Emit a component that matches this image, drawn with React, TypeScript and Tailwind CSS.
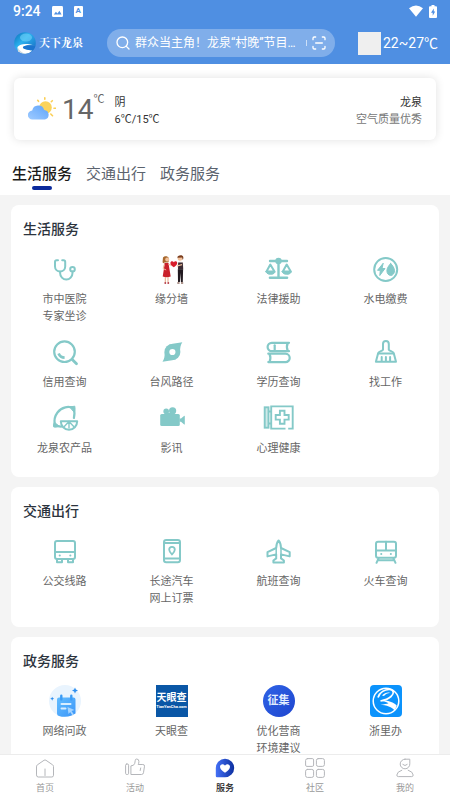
import { useState } from "react";
import type { ReactNode } from "react";
import { ScanLine, Search } from "lucide-react";
import { clsx } from "clsx";

interface Service {
  label: string[];
  icon: ReactNode;
}

interface Section {
  title: string;
  items: Service[];
}

const TEAL = "#84c9c8";

// Shared 32px line icon frame
function Line({ children, width = 2 }: { children: ReactNode; width?: number }) {
  return (
    <svg
      viewBox="0 0 32 32"
      className="size-8"
      fill="none"
      stroke={TEAL}
      strokeWidth={width}
      strokeLinecap="round"
      strokeLinejoin="round"
      aria-hidden="true"
    >
      {children}
    </svg>
  );
}

const StethoscopeIcon = () => (
  <Line>
    <path d="M9 7.3H7.6Q6 7.3 6 9v4.5a5.1 5.1 0 0 0 10.2 0V9q0-1.7-1.6-1.7H13.2" />
    <path d="M11.1 18.7V20a6.2 6.5 0 0 0 12.4 0v-1.4" />
    <circle cx="23.5" cy="16.2" r="2.3" />
  </Line>
);

const CoupleIcon = () => (
  <svg viewBox="0 0 32 32" className="size-8" aria-hidden="true">
    {/* woman */}
    <path d="M7 4.5c1.5-2 5-1.7 5.7.5.5 1.8.2 3-.5 4.5H8.500C7.500 11 6.500 10 6.600 8.500z" fill="#a8692f" />
    <circle cx="11.2" cy="6.6" r="2" fill="#f3c29c" />
    <path d="M8.500 10h4l.6 4 1.600 9.600c-2.500 1-5.500 1-8 0L8.200 14z" fill="#c9202b" />
    <path d="M8.200 11.500l-1 4 3 1.500" stroke="#f0bb95" strokeWidth="1" fill="none" />
    <path d="M12.500 11.500l3.200.8" stroke="#f0bb95" strokeWidth="1.1" fill="none" />
    <path d="M9.300 24v5M12 24v5" stroke="#e5ab86" strokeWidth="1" />
    <path d="M8.500 30h1.600M11.500 30h1.600" stroke="#a81620" strokeWidth="1.3" />
    {/* heart */}
    <path d="M17.8 14.3c-2-1.5-3.4-2.7-3.4-4.3 0-2 2.500-2.400 3.400-.7.9-1.700 3.400-1.300 3.400.7 0 1.600-1.400 2.800-3.400 4.300z" fill="#d81e2c" />
    {/* man */}
    <circle cx="24" cy="5.4" r="2.4" fill="#f3c29c" />
    <path d="M21.3 4.8c-.3-2.800 5.500-3.800 6-.8.2 1.500-.3 2.500-.6 3l-.6-2.400z" fill="#7a3c1c" />
    <path d="M21.500 9.300l2.500-1 3 1 .6 6.200h-6.200z" fill="#f4ece8" />
    <path d="M22.200 9.500h4.600l.4 7h-5.200z" fill="#3b2a33" />
    <path d="M21 13l5-1.300" stroke="#f3c29c" strokeWidth="1.2" />
    <path d="M21.800 16.300h5.300L26.800 29h-1.900l-.5-9-.5 9H22z" fill="#221a20" />
    <path d="M21.300 30h2.300M25 30h2.200" stroke="#5d2a1b" strokeWidth="1.2" />
  </svg>
);

const ScaleIcon = () => (
  <Line>
    <path d="M7 8h17M15.500 8v16.500" strokeWidth="2.4" />
    <path d="M7 24.800h17" strokeWidth="2.6" />
    <circle cx="15.5" cy="8" r="2.2" fill={TEAL} />
    <path d="M7.300 11.500L3.500 18.500h8z" />
    <path d="M3 18.500h9c0 3.800-9 3.800-9 0z" fill={TEAL} strokeWidth="1" />
    <path d="M23.700 11.500l-3.900 7h8z" />
    <path d="M19.200 18.500h9c0 3.800-9 3.800-9 0z" fill={TEAL} strokeWidth="1" />
  </Line>
);

const UtilityIcon = () => (
  <Line>
    <circle cx="15.7" cy="16.5" r="11.5" />
    <path d="M13 10.500l-5.500 6.800h2.800L9.800 22.500l5.200-7h-2.700z" fill={TEAL} strokeWidth="1" />
    <path d="M20.700 10.500c2 2 3.800 4.800 3.800 7.300a3.800 4.700 0 0 1-7.600 0c0-2.500 1.800-5.300 3.800-7.300z" fill={TEAL} strokeWidth="1" />
  </Line>
);

const MagnifierIcon = () => (
  <Line width={2.2}>
    <circle cx="15.5" cy="15.7" r="10.3" />
    <path d="M23.200 23.400l4.300 4.300" strokeWidth="2.8" />
    <path d="M9.600 17.500q1.700 4 6 4.200" strokeWidth="2.8" strokeLinecap="butt" />
  </Line>
);

const TyphoonIcon = () => (
  <svg viewBox="0 0 32 32" className="size-8" fill={TEAL} aria-hidden="true">
    <circle cx="16.400" cy="16" r="8" />
    <path d="M26.300 6.200C22 7.300 18 6.700 13 8.700l11 7c.2-4 .3-6.500 2.300-9.500z" />
    <path d="M6.500 25.800c4.300-1.100 8.300-.5 13.300-2.500l-11-7c-.2 4-.3 6.500-2.300 9.500z" />
    <circle cx="16.400" cy="16" r="3.100" fill="#fff" />
  </svg>
);

const BooksIcon = () => (
  <Line width={2.2}>
    <path d="M26 6.800H8.800a4.200 4.200 0 0 0 0 8.400H26M24.800 6.800q-1.800 4.200 0 8.400" />
    <path d="M5.300 17.700h17.200a4.200 4.200 0 0 1 0 8.400H5.300M6.500 17.700q1.800 4.200 0 8.400" />
    <path d="M11.700 9.300v4.500" />
  </Line>
);

const BrushIcon = () => (
  <Line>
    <path d="M13 13.800V8a2.900 2.900 0 0 1 5.800 0v5.800c1 1.500 4.200 1.300 4.900 3.300l2.300 8.700H5.900l2.300-8.700c.7-2 3.800-1.800 4.800-3.300z" />
    <path d="M8.500 17.600h14.800M11.700 21v4M15.900 21v4M20.100 21v4" />
  </Line>
);

const LemonIcon = () => (
  <Line>
    <path d="M24.500 6.500C20 3.500 12.500 5 8.500 10.500 5.500 14.500 5 18.500 5.800 22.500q3.500 2.500 7.500 2M24.500 6.500q1.700 4 .4 9.500" strokeWidth="2.2" />
    <path d="M20.500 4.600q2.500.3 5.300-.4.700 3-.2 6z" fill={TEAL} strokeWidth="1" />
    <path d="M5.200 20.500q-1.300 2.500-.5 4.400 2.500.7 5-.5z" fill={TEAL} strokeWidth="1" />
    <path d="M11.800 19.200h16.400a8.200 8.500 0 0 1-16.400 0z" fill="#fff" />
    <path d="M20 19.500v6.500M20 19.500l-4.700 5M20 19.500l4.700 5" strokeWidth="1.4" />
  </Line>
);

const CameraIcon = () => (
  <svg viewBox="0 0 32 32" className="size-8" fill={TEAL} aria-hidden="true">
    <circle cx="10.2" cy="9.4" r="2.8" />
    <circle cx="16.6" cy="8.8" r="3.6" />
    <rect x="4.2" y="12" width="19.6" height="12" rx="1.5" />
    <path d="M23.500 16.500h1.500l3.300-2.800c.4 0 .5.200.5.500v8c0 .4-.3.500-.6.300L25 19.800h-1.500z" />
    <rect x="11" y="11" width="4" height="2" />
  </svg>
);

const ClinicIcon = () => (
  <Line>
    <g strokeLinecap="butt" strokeLinejoin="miter" strokeWidth="1.9">
      <rect x="1.7" y="5.3" width="3.8" height="20.4" fill="#cfe9e8" />
      <path d="M5.500 9.500h2.700M5.500 21.500h2.700" />
      <path d="M22.500 26.600H8.200V4.400h21.500v22.200h-4.500" />
      <path d="M16.900 8.800h4.600v4.200h4.200v4.600h-4.200v4.200h-4.600v-4.200h-4.200V13h4.200z" />
    </g>
  </Line>
);

const BusIcon = () => (
  <Line>
    <rect x="6" y="6" width="20" height="18" rx="2" />
    <path d="M6 17h20" />
    <path d="M8 24v3.300h5V24M19 24v3.300h5V24" />
    <path d="M10.700 20.400h.1M21.300 20.400h.1" />
  </Line>
);

const PhoneTicketIcon = () => (
  <Line>
    <rect x="8" y="5" width="16" height="22.3" rx="2.2" />
    <path d="M8 8h16M8 23.400h16" />
    <path d="M16 19.500c-1.800-2-2.800-3.200-2.800-4.800a2.800 2.800 0 0 1 5.600 0c0 1.600-1 2.800-2.800 4.800z" strokeWidth="1.8" />
  </Line>
);

const PlaneIcon = () => (
  <Line>
    <path d="M15.600 5.500q-2.300 2.500-2.400 7.500L4.500 17.200v4.200l8.700-2v4l-2.800 2.100v2h10.500v-2l-2.900-2.100v-4l8.700 2v-4.200L18 13q-.1-5-2.400-7.500z" />
    <path d="M13.200 13v6.400M18 13v6.400" strokeWidth="1.5" />
  </Line>
);

const TrainIcon = () => (
  <Line>
    <rect x="6" y="6.8" width="20" height="16" rx="2" />
    <path d="M6 15.400h20M16 6.800v8.600M8 25.200h16M8.500 23.500l-2 4.300M23.500 23.500l2 4.300" />
    <path d="M11.200 19h.1M20.800 19h.1" />
  </Line>
);

const InquiryIcon = () => (
  <svg viewBox="0 0 32 32" className="size-8" aria-hidden="true">
    <defs>
      <linearGradient id="inquiry" x1="0" y1="0" x2="1" y2="1">
        <stop offset="0" stopColor="#63bdff" />
        <stop offset="1" stopColor="#3a95f8" />
      </linearGradient>
    </defs>
    <circle cx="16" cy="16" r="16" fill="#e9f4fe" />
    <path d="M10 12.500h14.500q2 0 2 2v14L22 30.800q-6 2-12 .2-2-.5-2-2.500v-14q0-2 2-2z" fill="url(#inquiry)" />
    <path d="M12.300 10.800v3.600M22.300 10.800v3.600" stroke="#3b9cf6" strokeWidth="2.4" strokeLinecap="round" />
    <path d="M12.500 19h9M12.500 23.500h4" stroke="#d9eeff" strokeWidth="2" strokeLinecap="round" />
    <path d="M18.500 22l7 3-3 1 2.500 3.500-1.500 1-2.300-3.500-1.700 2z" fill="#a5d4ff" />
    <path d="M26 2.500l.9 2.100 2.100.9-2.100.9-.9 2.100-.9-2.100-2.100-.9 2.100-.9zM3.200 11.700l.6 1.400 1.400.6-1.400.6-.6 1.400-.6-1.400-1.400-.6 1.400-.6z" fill="#2e8ff0" />
  </svg>
);

const TianyanIcon = () => (
  <span className="flex size-8 flex-col items-center justify-center bg-[#0a57a6] text-white">
    <span className="text-[10px] leading-3 font-bold whitespace-nowrap">天眼查</span>
    <span className="text-[4px] leading-[6px] font-bold whitespace-nowrap">TianYanCha.com</span>
  </span>
);

const CollectIcon = () => (
  <span className="flex size-8 items-center justify-center rounded-full bg-linear-to-br from-[#2f63e6] to-[#1f45cf]">
    <span className="text-[11px] leading-4 font-bold text-[#e3eeff]">征集</span>
  </span>
);

const ZhelibanIcon = () => (
  <svg viewBox="0 0 32 32" className="size-8" fill="none" stroke="#fff" aria-hidden="true">
    <rect width="32" height="32" rx="4" fill="#0c93fc" stroke="none" />
    <circle cx="16" cy="16" r="12.8" strokeWidth="1.5" />
    {/* upper ribbon */}
    <path d="M8 12.500C9.500 7 15 4.300 19.500 4.500c4.500.3 5 4 1.500 7-2.500 2.200-6.500 3.800-10.500 4.500" strokeWidth="1.7" />
    <path d="M12 10.500c2.500-2.500 6-3.500 8-2.500-2.500 0-4.500 1-6 3z" fill="#fff" stroke="none" />
    {/* lower ribbon */}
    <path d="M10 15.300c6-.3 14.500 1.700 16.800 5.500l-2.300 4.700C22.500 22 16 20.300 10.500 19.800c3.500-.5 6.500-.9 8-1.500-2.500-1.300-5.500-2.200-8.500-3z" fill="#fff" stroke="none" />
  </svg>
);

const sections: Section[] = [
  {
    title: "生活服务",
    items: [
      { label: ["市中医院", "专家坐诊"], icon: <StethoscopeIcon /> },
      { label: ["缘分墙"], icon: <CoupleIcon /> },
      { label: ["法律援助"], icon: <ScaleIcon /> },
      { label: ["水电缴费"], icon: <UtilityIcon /> },
      { label: ["信用查询"], icon: <MagnifierIcon /> },
      { label: ["台风路径"], icon: <TyphoonIcon /> },
      { label: ["学历查询"], icon: <BooksIcon /> },
      { label: ["找工作"], icon: <BrushIcon /> },
      { label: ["龙泉农产品"], icon: <LemonIcon /> },
      { label: ["影讯"], icon: <CameraIcon /> },
      { label: ["心理健康"], icon: <ClinicIcon /> },
    ],
  },
  {
    title: "交通出行",
    items: [
      { label: ["公交线路"], icon: <BusIcon /> },
      { label: ["长途汽车", "网上订票"], icon: <PhoneTicketIcon /> },
      { label: ["航班查询"], icon: <PlaneIcon /> },
      { label: ["火车查询"], icon: <TrainIcon /> },
    ],
  },
  {
    title: "政务服务",
    items: [
      { label: ["网络问政"], icon: <InquiryIcon /> },
      { label: ["天眼查"], icon: <TianyanIcon /> },
      { label: ["优化营商", "环境建议"], icon: <CollectIcon /> },
      { label: ["浙里办"], icon: <ZhelibanIcon /> },
    ],
  },
];

const navItems = [
  {
    label: "首页",
    icon: (
      <>
        <path d="M1.500 8.500q0-1 .8-1.600L9 2.300q1-.7 2 0l6.700 4.600q.8.600.8 1.600v8.800q0 1.700-1.700 1.700H3.200q-1.700 0-1.700-1.700z" />
        <path d="M10 11v6.500" />
      </>
    ),
  },
  {
    label: "活动",
    icon: (
      <>
        <rect x=".6" y="6" width="3" height="10.5" rx="1.2" />
        <path d="M6.300 7.800l2.200-.6q1.700-1.500 1.700-4.500 0-1.700 1.500-1.700 2.200 0 2.200 2.500 0 2-.7 3h4.600q1.900 0 1.700 1.700l-1 6.500q-.3 1.800-2 1.800H6.300z" />
        <path d="M15.700 10l-.5 2.500" />
      </>
    ),
  },
  {
    label: "服务",
    icon: (
      <>
        <defs>
          <linearGradient id="pin" x1="0" y1="0" x2="1" y2="0">
            <stop offset="0" stopColor="#4470f6" />
            <stop offset="1" stopColor="#0c2f9f" />
          </linearGradient>
        </defs>
        <path d="M10 .8a9.200 9.200 0 1 1 0 18.400H2q-1.200 0-1.200-1.200v-8A9.200 9.200 0 0 1 10 .8z" fill="url(#pin)" stroke="none" />
        <path d="M10 14.800c-3.200-2.200-5-3.700-5-6 0-2.800 3.600-3.600 5-1 1.400-2.600 5-1.800 5 1 0 2.300-1.800 3.800-5 6z" fill="#fff" stroke="none" />
      </>
    ),
  },
  {
    label: "社区",
    icon: (
      <>
        <path d="M2.500.6h4.800q1.300 0 1.300 1.300v5.200q0 1.300-1.300 1.300H1.900Q.6 8.400.6 7.100V2.500Q.6.6 2.500.6z" />
        <rect x="11.4" y=".6" width="8" height="7.8" rx="1.8" />
        <rect x=".6" y="11.4" width="8" height="8" rx="1.8" />
        <rect x="11.4" y="11.4" width="8" height="8" rx="1.8" />
      </>
    ),
  },
  {
    label: "我的",
    icon: (
      <>
        <path d="M10 1.200h4.800v4.600a4.800 4.800 0 1 1-4.800-4.600z" />
        <path d="M7.800 6.500q2.200 2.300 4.400 0" />
        <path d="M6.800 12.200Q2 13.800 1.800 17q0 1.600 1.500 1.600h13.400q1.500 0 1.500-1.600-.2-3.200-5-4.800" />
      </>
    ),
  },
];

function StatusBar() {
  return (
    <div className="flex h-[22px] items-center px-[13px]">
      <span className="text-sm leading-5 font-medium">9:24</span>
      <svg viewBox="0 0 12 12" className="ml-[11px] size-[11px]" aria-hidden="true">
        <rect width="12" height="12" rx="1.5" fill="#fff" />
        <path d="M2 9.300l2.300-3 1.600 1.800 2.200-2.800 2.300 4z" fill="#4f8fe2" />
      </svg>
      <span className="ml-[11px] flex h-[11px] w-[9px] items-center justify-center rounded-[1px] bg-white text-[8px] leading-none font-bold text-[#4f8fe2]">
        A
      </span>
      <svg viewBox="0 0 14 12" className="ml-auto h-3 w-3.5" fill="#fff" aria-hidden="true">
        <path d="M7 11.700L0 3.200Q7-2.400 14 3.200z" />
      </svg>
      <svg viewBox="0 0 8 13" className="ml-1.5 h-[13px] w-2" aria-hidden="true">
        <path d="M2.500 0h3v1.300H7q1 0 1 1V12q0 1-1 1H1q-1 0-1-1V2.300q0-1 1-1h1.500z" fill="#fff" />
        <path d="M4.800 3.500L2 7.700h1.700v3L6.200 6.500H4.800z" fill="#4f8fe2" />
      </svg>
    </div>
  );
}

function Logo() {
  return (
    <svg viewBox="0 0 22 22" className="size-[22px]" aria-hidden="true">
      <defs>
        <linearGradient id="globe" x1="0" y1="0" x2="1" y2="1">
          <stop offset="0" stopColor="#0a6fb8" />
          <stop offset=".4" stopColor="#2bb0ee" />
          <stop offset="1" stopColor="#1565bd" />
        </linearGradient>
      </defs>
      <circle cx="11" cy="11" r="10.8" fill="url(#globe)" />
      <ellipse cx="12" cy="5.5" rx="6" ry="4" fill="#6fd2f8" opacity=".6" />
      <path d="M3.500 15C6 11.500 13 11 21.300 13.700c-5-.8-11-.4-12.300 1.300-.8 1.800 4 2.600 9.500 3.500A10.800 10.800 0 0 1 4 19.300z" fill="#fff" />
      <path d="M9 15c1.500-1.700 7-2 12.400-1.300-.4 1.800-1.300 3.300-2.600 4.600C14 18 8.200 16.800 9 15z" fill="#1b74cf" />
      <path d="M3.500 15l.5 4.300q3 2.700 7 2.700c-3-1.500-6-3.500-7.500-7z" fill="#cfd8de" />
    </svg>
  );
}

function WeatherIcon() {
  return (
    <svg viewBox="0 0 28 24" className="h-6 w-7" aria-hidden="true">
      <defs>
        <linearGradient id="cloud" x1="0" y1="1" x2="1" y2="0">
          <stop offset="0" stopColor="#9fcbff" />
          <stop offset="1" stopColor="#5ea4fb" />
        </linearGradient>
      </defs>
      <circle cx="17.5" cy="10.5" r="6.3" fill="#fbd35c" />
      <path
        d="M16.800 2.300V.8M10.500 4.300l-.8-1M23.300 4.700l1-1M26 11.300h1.500M22.800 17l1.700 1.700"
        stroke="#fbcf55"
        strokeWidth="1.6"
        strokeLinecap="round"
      />
      <path d="M4.500 22.500a4.500 4.500 0 0 1-.3-9 6.200 6.200 0 0 1 12-.6 4.900 4.900 0 0 1 .8 9.600z" fill="url(#cloud)" />
    </svg>
  );
}

function ServiceCard({ title, items }: Section) {
  return (
    <section className="rounded-lg bg-white pt-3.5 pb-5">
      <h2 className="px-3 text-sm leading-5 font-medium text-[#2b333d]">{title}</h2>
      <div className="mt-3.5 grid grid-cols-4 gap-y-[11px]">
        {items.map((item) => (
          <a key={item.label[0]} href="#" className="flex flex-col items-center gap-1.5">
            {item.icon}
            <span className="text-center text-[11px] leading-[17px] text-[#666]">
              {item.label.map((line) => (
                <span key={line} className="block">
                  {line}
                </span>
              ))}
            </span>
          </a>
        ))}
      </div>
    </section>
  );
}

export default function App() {
  const [activeTab, setActiveTab] = useState("生活服务");
  const [keyword, setKeyword] = useState("");

  return (
    <div className="flex h-screen flex-col bg-white font-[Roboto,'Noto_Sans_CJK_SC',sans-serif]">
      {/* Header */}
      <header className="shrink-0 bg-[#4f8fe2] text-white">
        <StatusBar />
        <div className="flex h-[42px] items-center pr-3 pl-3.5">
          <Logo />
          <span className="ml-[3px] font-['Liberation_Serif','Noto_Serif_CJK_SC','Noto_Sans_CJK_SC',serif] text-[11px] leading-4 font-bold whitespace-nowrap">
            天下龙泉
          </span>
          <form
            className="ml-6 flex h-7 min-w-0 flex-1 items-center rounded-full bg-white/28 px-2"
            onSubmit={(e) => e.preventDefault()}
          >
            <Search className="size-4 shrink-0" strokeWidth={2} />
            <input
              type="text"
              aria-label="搜索"
              value={keyword}
              onChange={(e) => setKeyword(e.target.value)}
              placeholder="群众当主角！龙泉“村晚”节目…"
              className="ml-1 min-w-0 flex-1 bg-transparent text-xs leading-5 outline-none placeholder:text-white"
            />
            <span className="h-1.5 w-px shrink-0 bg-white/60" />
            <button type="button" aria-label="扫一扫" className="ml-1 shrink-0">
              <ScanLine className="size-4" strokeWidth={2} />
            </button>
          </form>
          <span className="ml-[23px] size-[23px] bg-[#efefef]" />
          <span className="ml-0.5 text-sm leading-5 whitespace-nowrap">22~27℃</span>
        </div>
      </header>

      <main className="min-h-0 flex-1 overflow-y-auto bg-[#f4f4f4] [scrollbar-width:none]">
        <div className="bg-white pt-3.5">
          {/* Weather */}
          <div className="mx-3.5 flex h-[62px] items-center rounded-md bg-white px-3.5 shadow-[0_0_10px_rgba(0,0,0,0.12)]">
            <WeatherIcon />
            <div className="ml-1.5 flex items-start pt-0.5 text-[#666]">
              <span className="text-[28px] leading-8">14</span>
              <span className="text-[11px] leading-3">℃</span>
            </div>
            <div className="ml-2.5 pt-1 text-[11px] leading-[17px] text-[#333]">
              <p>阴</p>
              <p>6℃/15℃</p>
            </div>
            <div className="ml-auto pt-1 text-right text-[11px] leading-[17px]">
              <p className="text-[#333]">龙泉</p>
              <p className="text-[#777]">空气质量优秀</p>
            </div>
          </div>

          {/* Category tabs */}
          <div className="flex gap-3.5 px-3 pt-[22px] pb-[5px]" role="tablist">
            {sections.map(({ title }) => (
              <button
                key={title}
                type="button"
                role="tab"
                aria-selected={activeTab === title}
                onClick={() => setActiveTab(title)}
                className={clsx(
                  "flex flex-col items-center text-[15px] leading-6",
                  activeTab === title ? "font-medium text-[#1a1a1a]" : "text-[#5b636e]"
                )}
              >
                {title}
                <span className={clsx("h-1 w-5 rounded-xs", activeTab === title && "bg-[#0b2a9c]")} />
              </button>
            ))}
          </div>
        </div>

        <div className="flex flex-col gap-2.5 px-[11px] py-2.5">
          {sections.map((section) => (
            <ServiceCard key={section.title} {...section} />
          ))}
        </div>
      </main>

      {/* Bottom navigation */}
      <nav className="grid shrink-0 grid-cols-5 border-t border-[#ececec] bg-white pt-[3px] pb-1.5">
        {navItems.map(({ label, icon }) => (
          <a
            key={label}
            href="#"
            className={clsx(
              "flex flex-col items-center gap-1 text-[9px] leading-3",
              label === "服务" ? "font-medium text-[#222]" : "text-[#999]"
            )}
          >
            <svg
              viewBox="0 0 20 20"
              className="size-5"
              fill="none"
              stroke="#b4b6ba"
              strokeLinecap="round"
              strokeLinejoin="round"
              aria-hidden="true"
            >
              {icon}
            </svg>
            {label}
          </a>
        ))}
      </nav>
    </div>
  );
}
